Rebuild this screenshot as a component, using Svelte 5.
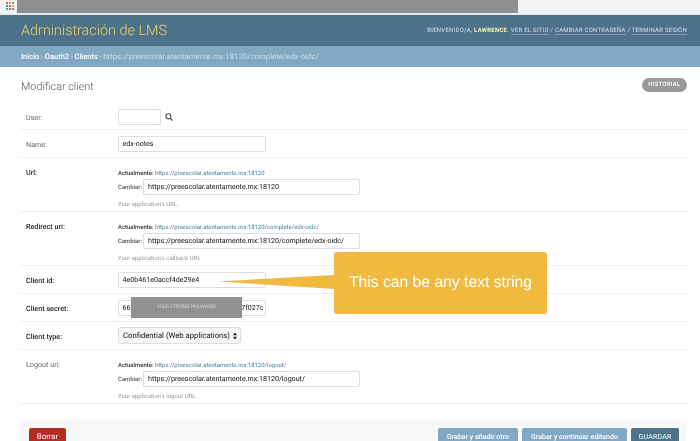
<script>
  const dots = ['#e8584f','#f0b23e','#59b15f','#4a90d9','#e8584f','#f0b23e','#59b15f','#4a90d9','#e8584f'];
</script>

<div class="page">
  <div class="chrome">
    <div class="apps">{#each dots as d}<i style="background:{d}"></i>{/each}</div>
    <div class="redact-top"></div>
  </div>
  <header class="head">
    <h1>Administración de LMS</h1>
    <div class="tools">BIENVENIDO/A, <b>LAWRENCE</b>. <u>VER EL SITIO</u> / <u>CAMBIAR CONTRASEÑA</u> / <u>TERMINAR SESIÓN</u></div>
  </header>
  <nav class="crumbs"><span>Inicio</span> <em>›</em> <span>Oauth2</span> <em>›</em> <span>Clients</span> <em>›</em> <small>https://preescolar.atentamente.mx:18120/complete/edx-oidc/</small></nav>

  <main class="content">
    <div class="title">
      <h2>Modificar client</h2>
      <span class="hist">HISTORIAL</span>
    </div>

    <div class="row r-user">
      <label>User:</label>
      <div class="field line"><span class="input user"></span>
        <svg width="8" height="8" viewBox="0 0 12 12"><circle cx="5" cy="5" r="3.8" fill="none" stroke="#444" stroke-width="1.6"/><path d="M8 8l3.2 3.2" stroke="#444" stroke-width="1.9"/></svg>
      </div>
    </div>
    <div class="row r-name">
      <label>Name:</label>
      <div class="field"><span class="input short">edx-notes</span></div>
    </div>
    <div class="row r-url">
      <label class="req">Url:</label>
      <div class="field">
        <p class="cur"><b>Actualmente:</b> <a>https://preescolar.atentamente.mx:18120</a></p>
        <div class="chg"><b>Cambiar:</b><span class="input long">https://preescolar.atentamente.mx:18120</span></div>
        <p class="help">Your application's URL.</p>
      </div>
    </div>
    <div class="row r-url">
      <label class="req">Redirect uri:</label>
      <div class="field">
        <p class="cur"><b>Actualmente:</b> <a>https://preescolar.atentamente.mx:18120/complete/edx-oidc/</a></p>
        <div class="chg"><b>Cambiar:</b><span class="input long">https://preescolar.atentamente.mx:18120/complete/edx-oidc/</span></div>
        <p class="help">Your application's callback URL</p>
      </div>
    </div>
    <div class="row r-name">
      <label class="req">Client id:</label>
      <div class="field"><span class="input short">4e0b461e0accf4de29e4</span></div>
    </div>
    <div class="row r-name">
      <label class="req">Client secret:</label>
      <div class="field secret">
        <span class="input short between"><span>665</span><span class="clip">57f027c</span></span>
        <div class="redact-pass">YOUR STRONG PASSWORD</div>
      </div>
    </div>
    <div class="row r-name">
      <label class="req">Client type:</label>
      <div class="field"><span class="input select">Confidential (Web applications)<svg width="4" height="8" viewBox="0 0 5 9"><path d="M2.5 0L5 3.6H0zM2.5 9L0 5.4h5z" fill="#222"/></svg></span></div>
    </div>
    <div class="row r-url">
      <label>Logout uri:</label>
      <div class="field">
        <p class="cur"><b>Actualmente:</b> <a>https://preescolar.atentamente.mx:18120/logout/</a></p>
        <div class="chg"><b>Cambiar:</b><span class="input long">https://preescolar.atentamente.mx:18120/logout/</span></div>
        <p class="help">Your application's logout URL</p>
      </div>
    </div>

    <div class="submit">
      <span class="btn del">Borrar</span>
      <span class="gap"></span>
      <span class="btn alt a1">Grabar y añadir otro</span>
      <span class="btn alt a2">Grabar y continuar editando</span>
      <span class="btn save">GUARDAR</span>
    </div>
  </main>

  <div class="callout">
    <svg class="tail" width="116" height="14" viewBox="0 0 116 14"><path d="M0 6.5L116 0V14Z" fill="#f0ba41"/></svg>
    This can be any text string
  </div>
</div>

<style>
  :global(body) { margin: 0; background: #fff; }
  .page { position: relative; width: 700px; height: 441px; overflow: hidden; background: #fff; font-family: Roboto, "Liberation Sans", sans-serif; color: #333; text-rendering: geometricPrecision; filter: blur(0.35px); }
  .chrome { height: 14px; background: #f2f2f2; display: flex; box-sizing: border-box; }
  .apps { width: 8px; height: 8px; margin: 2px 0 0 6px; display: grid; grid-template-columns: repeat(3, 2px); gap: 1px; }
  .apps i { display: block; width: 2px; height: 2px; }
  .redact-top { margin-left: 3px; width: 501px; height: 13px; background: #8f8f8f; }
  .head { height: 32px; background: #4e7289; display: flex; align-items: center; justify-content: space-between; padding: 0 13px 0 21px; box-sizing: border-box; border-top: 1px solid #e4e4e4; }
  .head h1 { margin: 0; font-size: 14.4px; font-weight: 300; color: #e8d264; }
  .tools { font-size: 5.95px; font-weight: 400; color: #d3e0e8; letter-spacing: 0.28px; }
  .tools b { color: #f5f5b8; font-weight: 700; }
  .tools u { text-decoration: none; border-bottom: 1px solid #7d9bad; }
  .crumbs { height: 21px; background: #82a9c3; display: flex; align-items: center; gap: 1.6px; padding-left: 21px; box-sizing: border-box; font-size: 7.5px; color: #fff; }
  .crumbs span { font-weight: 500; }
  .crumbs em { font-style: normal; color: #c9dce8; }
  .crumbs small { font-size: 7.8px; color: #c9dce8; }
  .content { padding: 0 13px 0 20px; }
  .title { height: 38px; display: flex; justify-content: space-between; align-items: center; box-sizing: border-box; }
  .title h2 { margin: 0 0 0 1px; font-size: 10.8px; font-weight: 300; color: #555; }
  .hist { background: #999; color: #fff; font-size: 6px; font-weight: 500; height: 14px; line-height: 14px; padding: 0 6.5px; border-radius: 7px; letter-spacing: 0.25px; margin-top: -2px; }
  .row { display: flex; border-bottom: 1px solid #f0f0f0; box-sizing: border-box; }
  .row label { width: 98px; padding-left: 6px; box-sizing: border-box; font-size: 7.2px; color: #666; flex: none; }
  .row label.req { font-weight: 500; color: #222; }
  .r-user { height: 25px; align-items: center; }
  .r-name { height: 28px; align-items: center; }
  .r-name label { padding-top: 1px; }
  .r-url { height: 54px; padding-top: 8px; }
  .r-url label { padding-top: 2px; }
  .field { font-size: 5.95px; }
  .line { display: flex; align-items: center; gap: 4px; }
  .input { display: block; box-sizing: border-box; height: 16px; background: #fff; border: 1px solid #ddd; border-radius: 2px; font-size: 7.1px; line-height: 14px; padding: 0 3.5px; color: #111; white-space: nowrap; }
  .user { width: 43px; }
  .short { width: 148px; }
  .long { width: 217px; font-size: 7.1px; padding-left: 3.5px; }
  .between { display: flex; justify-content: space-between; }
  .clip { margin-right: -2px; }
  .select { width: 123px; height: 17px; background: #f5f5f5; line-height: 15px; padding: 0 3.5px 0 4px; font-size: 7.7px; display: flex; justify-content: space-between; align-items: center; border-radius: 3px; }
  .cur { margin: 3px 0 0; height: 9px; line-height: 9px; color: #333; white-space: nowrap; }
  .cur b { font-weight: 500; }
  .cur a { color: #447e9b; }
  .chg { display: flex; align-items: center; gap: 1.5px; margin-top: 1px; color: #555; }
  .chg b { font-weight: 500; }
  .help { margin: 4.5px 0 0; color: #999; font-size: 6px; line-height: 9px; }
  .secret { position: relative; }
  .redact-pass { position: absolute; left: 13px; top: -3px; width: 111px; height: 21px; background: #919191; color: #d8d8d8; font-size: 4.9px; display: flex; align-items: center; justify-content: center; }
  .submit { margin-top: 16px; height: 40px; display: flex; gap: 4px; background: #f8f8f8; border-radius: 2px; padding: 8px 8px 0 9px; box-sizing: border-box; }
  .gap { flex: 1; }
  .btn { height: 18px; line-height: 19px; border-radius: 2px; font-size: 7px; color: #fff; font-weight: 500; text-align: center; white-space: nowrap; box-sizing: border-box; }
  .del { background: #b52c25; font-size: 7.8px; font-weight: 400; width: 37px; height: 20px; line-height: 18px; }
  .alt { background: #82a9c3; }
  .a1 { width: 80px; }
  .a2 { width: 105px; }
  .save { background: #4e7289; font-weight: 400; letter-spacing: 0.2px; width: 48px; }
  .callout { position: absolute; left: 334px; top: 252px; width: 213px; height: 62px; background: #f0ba41; border-radius: 3px; color: #fff; font-family: "Liberation Sans", sans-serif; font-size: 15.7px; line-height: 62px; text-align: center; white-space: nowrap; }
  .tail { position: absolute; left: -116px; top: 23px; }
</style>
